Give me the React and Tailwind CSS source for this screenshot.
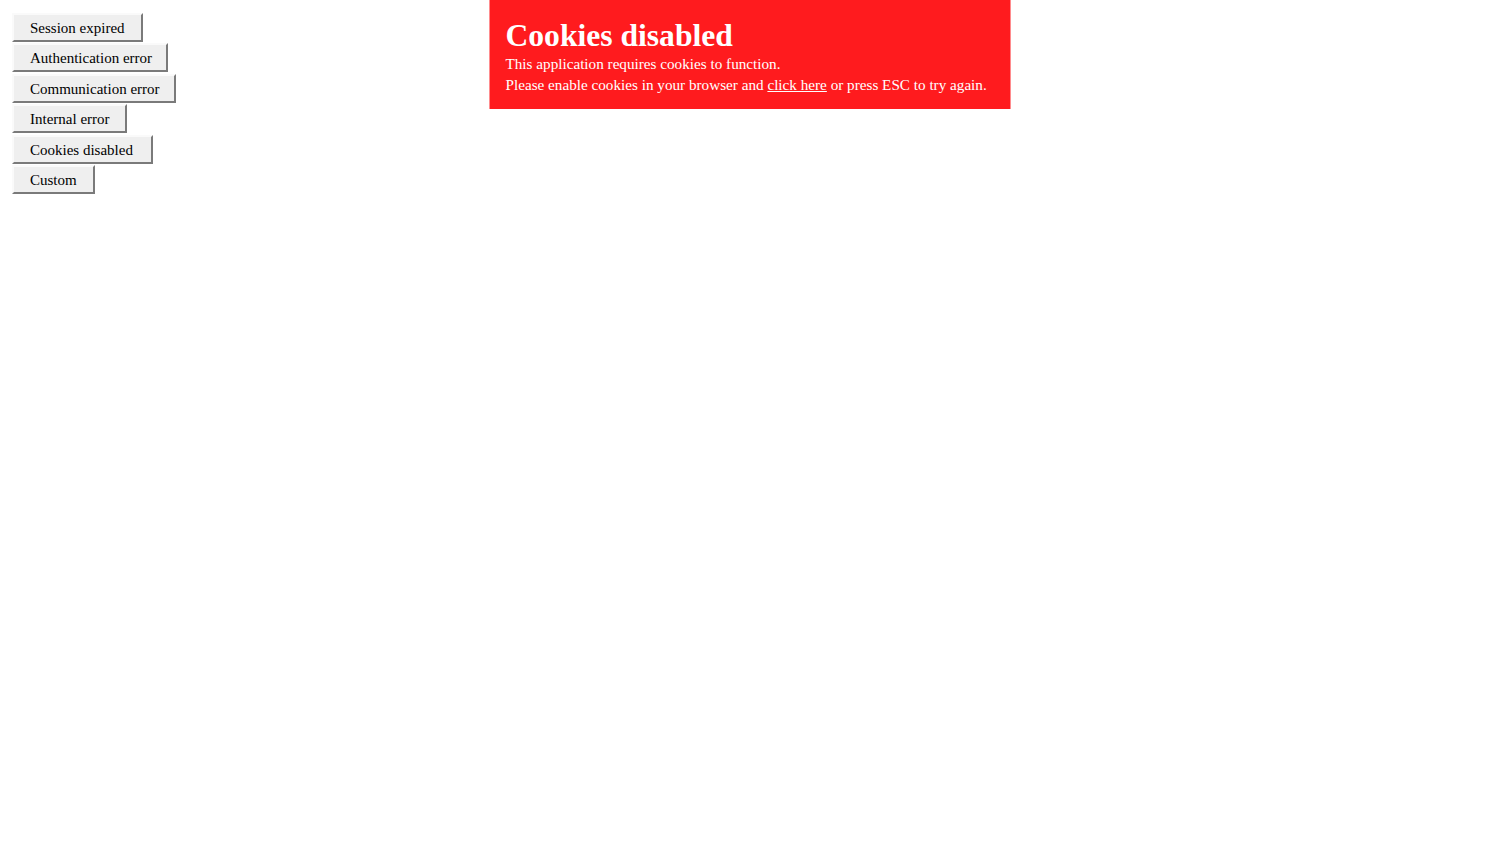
export default function App() {
  const buttons = [
    ["Session expired", "w-[131px]"],
    ["Authentication error", "w-[156px]"],
    ["Communication error", "w-[164px]"],
    ["Internal error", "w-[115px]"],
    ["Cookies disabled", "w-[141px]"],
    ["Custom", "w-[83px]"],
  ];
  return (
    <div className="relative min-h-[850px] w-full bg-white" style={{ fontFamily: '"Liberation Serif", "Times New Roman", serif' }}>
      <div className="flex flex-col items-start gap-[1.4px] pl-[12px] pt-[13px]">
        {buttons.map(([b, w]) => (
          <button
            key={b}
            className={`${w} h-[29px] whitespace-nowrap border-2 border-t-[#fafafa] border-l-[#fafafa] border-r-[#7a7a7a] border-b-[#7a7a7a] bg-[#efefef] pl-[16px] pr-0 pt-[2px] text-left text-[15px] leading-none text-black`}
            style={{ fontFamily: '"Liberation Serif", "Times New Roman", serif' }}
          >
            {b}
          </button>
        ))}
      </div>
      <div className="absolute left-1/2 top-0 w-[521px] -translate-x-1/2 bg-[#ff1b1e] px-[16px] pb-[14px] pt-[19px] text-white">
        <div className="text-[31.6px] font-bold leading-[34px]">Cookies disabled</div>
        <div className="text-[15.2px] leading-[21px]">This application requires cookies to function.</div>
        <div className="text-[15.2px] leading-[21px]">
          Please enable cookies in your browser and <span className="underline">click here</span> or press ESC to try again.
        </div>
      </div>
    </div>
  );
}
